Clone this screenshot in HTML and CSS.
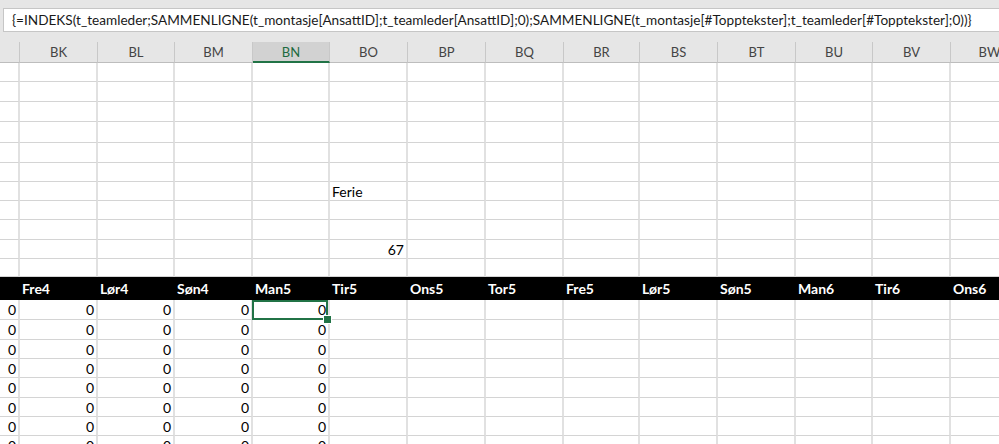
FILE: index.html
```html
<!DOCTYPE html>
<html lang="no">
<head>
<meta charset="utf-8">
<title>Regneark</title>
<link rel="stylesheet" href="styles.css">
</head>
<body>
<div class="fbar">
  <div class="fbox">{=INDEKS(t_teamleder;SAMMENLIGNE(t_montasje[AnsattID];t_teamleder[AnsattID];0);SAMMENLIGNE(t_montasje[#Topptekster];t_teamleder[#Topptekster];0))}</div>
</div>
<div class="sheet">
  <div class="row colhead"><span></span><span>BK</span><span>BL</span><span>BM</span><span class="cur">BN</span><span>BO</span><span>BP</span><span>BQ</span><span>BR</span><span>BS</span><span>BT</span><span>BU</span><span>BV</span><span>BW</span></div>
  <div class="row h19"><span></span><span></span><span></span><span></span><span></span><span></span><span></span><span></span><span></span><span></span><span></span><span></span><span></span><span></span></div>
  <div class="row h20"><span></span><span></span><span></span><span></span><span></span><span></span><span></span><span></span><span></span><span></span><span></span><span></span><span></span><span></span></div>
  <div class="row h20"><span></span><span></span><span></span><span></span><span></span><span></span><span></span><span></span><span></span><span></span><span></span><span></span><span></span><span></span></div>
  <div class="row h21"><span></span><span></span><span></span><span></span><span></span><span></span><span></span><span></span><span></span><span></span><span></span><span></span><span></span><span></span></div>
  <div class="row h20"><span></span><span></span><span></span><span></span><span></span><span></span><span></span><span></span><span></span><span></span><span></span><span></span><span></span><span></span></div>
  <div class="row h19"><span></span><span></span><span></span><span></span><span></span><span></span><span></span><span></span><span></span><span></span><span></span><span></span><span></span><span></span></div>
  <div class="row h19"><span></span><span></span><span></span><span></span><span></span><span class="txt">Ferie</span><span></span><span></span><span></span><span></span><span></span><span></span><span></span><span></span></div>
  <div class="row h19"><span></span><span></span><span></span><span></span><span></span><span></span><span></span><span></span><span></span><span></span><span></span><span></span><span></span><span></span></div>
  <div class="row h20"><span></span><span></span><span></span><span></span><span></span><span></span><span></span><span></span><span></span><span></span><span></span><span></span><span></span><span></span></div>
  <div class="row h19"><span></span><span></span><span></span><span></span><span></span><span class="num">67</span><span></span><span></span><span></span><span></span><span></span><span></span><span></span><span></span></div>
  <div class="row h18"><span></span><span></span><span></span><span></span><span></span><span></span><span></span><span></span><span></span><span></span><span></span><span></span><span></span><span></span></div>
  <div class="row thead"><span></span><span>Fre4</span><span>Lør4</span><span>Søn4</span><span>Man5</span><span>Tir5</span><span>Ons5</span><span>Tor5</span><span>Fre5</span><span>Lør5</span><span>Søn5</span><span>Man6</span><span>Tir6</span><span>Ons6</span></div>
  <div class="row h20 data"><span>0</span><span>0</span><span>0</span><span>0</span><span class="sel">0</span><span></span><span></span><span></span><span></span><span></span><span></span><span></span><span></span><span></span></div>
  <div class="row h20 data"><span>0</span><span>0</span><span>0</span><span>0</span><span>0</span><span></span><span></span><span></span><span></span><span></span><span></span><span></span><span></span><span></span></div>
  <div class="row h19 data"><span>0</span><span>0</span><span>0</span><span>0</span><span>0</span><span></span><span></span><span></span><span></span><span></span><span></span><span></span><span></span><span></span></div>
  <div class="row h19 data"><span>0</span><span>0</span><span>0</span><span>0</span><span>0</span><span></span><span></span><span></span><span></span><span></span><span></span><span></span><span></span><span></span></div>
  <div class="row h20 data"><span>0</span><span>0</span><span>0</span><span>0</span><span>0</span><span></span><span></span><span></span><span></span><span></span><span></span><span></span><span></span><span></span></div>
  <div class="row h19 data"><span>0</span><span>0</span><span>0</span><span>0</span><span>0</span><span></span><span></span><span></span><span></span><span></span><span></span><span></span><span></span><span></span></div>
  <div class="row h19 data"><span>0</span><span>0</span><span>0</span><span>0</span><span>0</span><span></span><span></span><span></span><span></span><span></span><span></span><span></span><span></span><span></span></div>
  <div class="row h20 data"><span>0</span><span>0</span><span>0</span><span>0</span><span>0</span><span></span><span></span><span></span><span></span><span></span><span></span><span></span><span></span><span></span></div>
</div>
</body>
</html>
```

FILE: styles.css
```css
* { box-sizing: border-box; }
html, body { margin: 0; padding: 0; background: #fff; overflow: hidden; }
body {
  width: 999px;
  height: 444px;
  font-family: Lato, "Liberation Sans", sans-serif;
  font-size: 14px;
  color: #000;
}

.fbar {
  height: 42px;
  background: #e6e6e6;
  padding: 8px 0 10px 3px;
}
.fbox {
  height: 24px;
  background: #fff;
  border: 1px solid #c6c6c6;
  border-right: none;
  padding-left: 8px;
  display: flex;
  align-items: center;
  white-space: nowrap;
  overflow: hidden;
  color: #1a1a1a;
  font-size: 13.6px;
}

.sheet { width: 1029px; }
.row { display: flex; }
.row > span {
  flex: none;
  display: flex;
  align-items: center;
  position: relative;
  white-space: nowrap;
  border-right: 2px solid #e1e1e1;
  border-bottom: 1px solid #d4d4d4;
  padding: 0 2px;
}
.row > span:nth-child(1) { width: 20px; }
.row > span:nth-child(2) { width: 78px; }
.row > span:nth-child(3) { width: 77px; }
.row > span:nth-child(4) { width: 78px; }
.row > span:nth-child(5) { width: 77px; }
.row > span:nth-child(6) { width: 78px; }
.row > span:nth-child(7) { width: 78px; }
.row > span:nth-child(8) { width: 78px; }
.row > span:nth-child(9) { width: 76px; }
.row > span:nth-child(10) { width: 78px; }
.row > span:nth-child(11) { width: 78px; }
.row > span:nth-child(12) { width: 77px; }
.row > span:nth-child(13) { width: 78px; }
.row > span:nth-child(14) { width: 78px; }

.h18 { height: 18px; }
.h19 { height: 19px; }
.h20 { height: 20px; }
.h21 { height: 21px; }

.colhead { height: 21px; background: #e6e6e6; }
.colhead > span {
  justify-content: center;
  color: #444;
  font-size: 13px;
  border-right: 1px solid #c8c8c8;
  border-bottom: 1px solid #bdbdbd;
}
.colhead > span.cur {
  background: #d2d2d2;
  color: #1e6b40;
  border-bottom: 2px solid #217346;
}

.txt { justify-content: flex-start; }
.num { justify-content: flex-end; }

.thead { height: 23px; background: #000; }
.thead > span {
  border-color: #000;
  color: #fff;
  font-weight: bold;
  font-size: 14px;
  padding-left: 2px;
}

.data > span { justify-content: flex-end; font-size: 14px; }

.sel::after {
  content: "";
  position: absolute;
  left: -1px;
  top: 0;
  right: 0;
  bottom: -1px;
  border: 2px solid #217346;
}
.sel::before {
  content: "";
  position: absolute;
  right: -4px;
  bottom: -5px;
  width: 7px;
  height: 7px;
  background: #217346;
  border: 1px solid #fff;
  z-index: 2;
}
```
